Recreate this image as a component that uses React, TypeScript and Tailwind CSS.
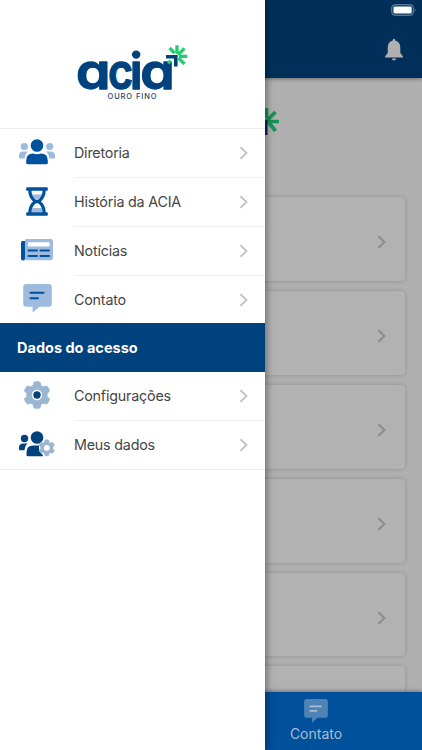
import React from "react";

const PRIMARY = "#00427d";
const LIGHT = "#9dbbdc";

function Logo() {
  return (
    <svg width="134" height="74" viewBox="66 36 134 74" className="block shrink-0">
      <g
        fill={PRIMARY}
        stroke={PRIMARY}
        strokeWidth="1.3"
        strokeLinejoin="round"
        fontFamily="Inter, sans-serif"
        fontWeight="600"
        fontSize="49"
        style={{ fontFeatureSettings: '"cv11"' }}
      >
        <text x="76" y="89" textLength="34.5" lengthAdjust="spacingAndGlyphs">a</text>
        <text x="108" y="89" textLength="25" lengthAdjust="spacingAndGlyphs">c</text>
        <text x="129.700" y="89">i</text>
        <text x="140.300" y="89" textLength="34.5" lengthAdjust="spacingAndGlyphs">a</text>
      </g>
      <text x="107.500" y="99" textLength="49" fontFamily="Inter, sans-serif" fontWeight="500" fontSize="7.500" fill="#24456f">OURO FINO</text>
      <path d="M166 56.800h9.800V66.500" fill="none" stroke="#fff" strokeWidth="6" />
      <path d="M166 56.800h9.800V66.500" fill="none" stroke={PRIMARY} strokeWidth="3.600" />
      <g stroke="#22cf70" strokeWidth="3.300">
        <path d="M177 45.300v8.500M169.500 48l5 5M184.500 48.300l-6.500 6.500M187.300 56.300h-8.300M184.500 64l-6-6M170.700 60.700l-2.600 2.600" />
      </g>
    </svg>
  );
}

function People() {
  return (
    <svg width="36" height="26" viewBox="0 0 36 26">
      <g fill={LIGHT}>
        <circle cx="5.300" cy="7.500" r="3.600" />
        <circle cx="30.700" cy="7.500" r="3.600" />
        <path d="M0 18.500v-2Q0 12.500 4.500 12.500H9q-2.800 2-3.300 7H1q-1 0-1-1zM36 18.500v-2Q36 12.500 31.500 12.500H27q2.800 2 3.300 7H35q1 0 1-1z" />
      </g>
      <g fill="#00529e">
        <circle cx="18" cy="6.500" r="6.300" />
        <path d="M7.200 24v-2.500Q7.200 14.500 14 14.500q4 1.300 8 0 6.800 0 6.800 7V24q0 1.300-1.500 1.300H8.700q-1.500 0-1.500-1.300z" />
      </g>
    </svg>
  );
}

function Hourglass() {
  return (
    <svg width="22" height="29" viewBox="0 0 22 29">
      <path d="M6 7.500h10c-.8 2.300-2.500 4-5 5-2.500-1-4.200-2.700-5-5zM5 25.500c0-2.500.5-3.500 1.500-4.500h9c1 1 1.500 2 1.500 4.500z" fill={LIGHT} />
      <path d="M3.800 3c0 5.500 2.200 9 5.700 11.500C6 17 3.800 20.500 3.800 26M18.200 3c0 5.500-2.200 9-5.700 11.500 3.500 2.500 5.700 6 5.700 11.500" fill="none" stroke="#00529e" strokeWidth="3.200" />
      <path d="M1 .300h20q.8 0 .8.800v1.800q0 .8-.8.800H1q-.8 0-.8-.8V1.100q0-.8.8-.8zM1 25.300h20q.8 0 .8.800v1.800q0 .8-.8.800H1q-.8 0-.8-.8v-1.800q0-.8.8-.8zM9.500 12.700h3v3.600h-3z" fill="#00529e" />
    </svg>
  );
}

function News() {
  return (
    <svg width="32" height="22" viewBox="0 0 32 22">
      <path d="M0 3.500Q0 2 1.500 2H4v18q0 1.500-2 1.500T0 19.500z" fill="#00529e" />
      <path d="M4 1.500Q4 0 5.500 0H30q2 0 2 2v17q0 2.300-2.300 2.300H3Q4 20.500 4 19z" fill={LIGHT} />
      <rect x="7" y="3.300" width="21.700" height="4.200" rx=".5" fill="#fff" />
      <path d="M7.500 11.500h8.500M19.500 11.500h8.500M7.500 17h8.500M19.500 17h8.500" stroke="#00529e" strokeWidth="2" strokeLinecap="round" />
    </svg>
  );
}

function Chat({ width, bubble, line }: { width: number; bubble: string; line: string }) {
  return (
    <svg width={width} height={width} viewBox="0 0 29 29">
      <path d="M3.500 0h22q3.300 0 3.300 3.300v16.200q0 3.300-3.300 3.300H16.500l-6.200 5.300q-.7.500-.7-.5v-4.800H3.500Q.2 22.800.2 19.500V3.300Q.2 0 3.500 0z" fill={bubble} />
      <path d="M7.500 8.800h13M7.500 14.300H15" stroke={line} strokeWidth="2.100" strokeLinecap="round" />
    </svg>
  );
}

function GearShape() {
  return (
    <path
      d="M11 1.200Q14 .2 17 1.200L17.700 4.500 20.300 6 23.600 5Q25.900 7.200 26.500 10L24.100 12.400V15.600L26.500 18Q25.900 20.800 23.600 23L20.300 22 17.700 23.500 17 26.800Q14 27.800 11 26.800L10.300 23.500 7.700 22 4.400 23Q2.100 20.800 1.500 18L3.900 15.600V12.400L1.500 10Q2.100 7.200 4.400 5L7.700 6 10.300 4.500z"
      fill="#9bb6d1"
      stroke="#9bb6d1"
      strokeLinejoin="round"
    />
  );
}

function Gear() {
  return (
    <svg width="28" height="28" viewBox="0 0 28 28">
      <GearShape />
      <circle cx="14" cy="14" r="5.200" fill="#fff" />
      <circle cx="14" cy="14" r="3.700" fill={PRIMARY} />
    </svg>
  );
}

function PeopleGear() {
  return (
    <svg width="36" height="26" viewBox="0 0 36 26">
      <g fill={PRIMARY}>
        <circle cx="5.500" cy="7.500" r="3.700" />
        <circle cx="18" cy="6.500" r="6.300" />
        <path d="M0 18v-1.500Q0 12.500 4.500 12.500h4q-2.500 2-3 6.800H1q-1 0-1-1.300zM7.500 24v-2.500q0-7 6.500-7h8v7.500q2 1 2 3.300H9q-1.500 0-1.500-1.300z" />
      </g>
      <svg x="19.300" y="8.300" width="17" height="17" viewBox="0 0 28 28" overflow="visible">
        <circle cx="14" cy="14" r="13" fill="#fff" />
        <GearShape />
        <circle cx="14" cy="14" r="4.800" fill="#fff" />
      </svg>
    </svg>
  );
}

function Chevron({ color }: { color: string }) {
  return (
    <svg width="10" height="14" viewBox="0 0 10 14" className="shrink-0">
      <path d="M1.500 1.200 7.500 7 1.500 12.800" fill="none" stroke={color} strokeWidth="1.900" />
    </svg>
  );
}

function Row({ icon, label, last = false }: { icon: React.ReactNode; label: string; last?: boolean }) {
  return (
    <li className={"flex items-stretch " + (last ? "h-12" : "h-[49px]")}>
      <div className="flex w-[74px] items-center justify-center pb-[3px]">{icon}</div>
      <div className={"flex flex-1 items-center justify-between pr-4 " + (last ? "" : "border-b border-[#efefef]")}>
        <span className="text-[14.300px] tracking-[-0.200px] text-[#454545]">{label}</span>
        <Chevron color="#c4c4c4" />
      </div>
    </li>
  );
}

function Drawer() {
  return (
    <aside className="absolute inset-y-0 left-0 w-[265px] bg-white shadow-[0_0_9px_rgba(0,0,0,0.55)]">
      <div className="flex h-[129px] justify-center border-b border-[#ececec] pt-9">
        <Logo />
      </div>
      <ul className="h-[194px]">
        <Row icon={<People />} label="Diretoria" />
        <Row icon={<Hourglass />} label="História da ACIA" />
        <Row icon={<News />} label="Notícias" />
        <Row icon={<Chat width={29} bubble={LIGHT} line="#00529e" />} label="Contato" last />
      </ul>
      <h2 className="relative flex h-[49px] items-center bg-[#00427d] pl-[17px] text-[14.500px] font-bold text-white">Dados do acesso</h2>
      <ul className="border-b border-[#ececec]">
        <Row icon={<Gear />} label="Configurações" />
        <Row icon={<PeopleGear />} label="Meus dados" last />
      </ul>
    </aside>
  );
}

export default function App() {
  return (
    <div className="relative flex h-[750px] w-[422px] flex-col overflow-hidden bg-[#b0b0b0] font-[Inter,sans-serif]">
      <header className="flex h-[78px] shrink-0 flex-col items-end bg-[#003059] shadow-[0_1px_4px_rgba(0,0,0,0.4)]">
        <svg width="26" height="12" viewBox="0 0 26 12" className="mt-[4px] mr-[5px] shrink-0">
          <rect x=".8" y=".8" width="21.500" height="10.400" rx="2.800" fill="none" stroke="#7f96ab" />
          <rect x="2.500" y="2.500" width="18.200" height="7" rx="1.300" fill="#fff" />
          <path d="M23.800 4.300q1.500 1.700 0 3.400z" fill="#7f96ab" />
        </svg>
        <svg width="20" height="24" viewBox="0 0 20 24" className="mt-[22px] mr-[18px] shrink-0">
          <path d="M10 .8q1.300 0 1.300 1.800 5 1.300 5 7.400V15l2.700 3.500v.9H1v-.9L3.700 15v-5q0-6.100 5-7.400Q8.700.8 10 .8zM7.800 20.500h4.400q-.4 2-2.200 2t-2.200-2z" fill="#b0b0b0" />
        </svg>
      </header>
      <main className="flex min-h-0 flex-1 flex-col overflow-hidden">
        <div className="flex h-[119px] shrink-0 items-start justify-center pt-[28px]">
          <svg width="142" height="90" viewBox="0 0 142 90">
            <path d="M126.500 2v10M135.500 6l-8.500 8.500M139 15.500h-10M135.500 25l-7.500-9.500" stroke="#159555" strokeWidth="3.700" fill="none" />
            <path d="M115 16h10.300V29" stroke="#002f5c" strokeWidth="4.500" fill="none" />
          </svg>
        </div>
        <div className="flex flex-col gap-[10px] px-[17px]">
          {[0, 1, 2, 3, 4, 5].map((i) => (
            <div key={i} className="flex h-[83.900px] shrink-0 items-center justify-end rounded-[4px] bg-[#b2b2b2] pt-[7px] pr-[18px] shadow-[0_0_4px_rgba(0,0,0,0.2)]">
              <Chevron color="#8b8b8b" />
            </div>
          ))}
        </div>
      </main>
      <footer className="flex h-[58px] shrink-0 justify-end bg-[#00509b] shadow-[0_-1px_4px_rgba(0,0,0,0.35)]">
        <div className="mr-[53px] flex w-[106px] flex-col items-center pt-[7px]">
          <Chat width={24} bubble="#4f82b5" line="#a9bdd0" />
          <span className="mt-[2px] text-[14px] leading-[18px] text-[#a9bdd0]">Contato</span>
        </div>
      </footer>
      <Drawer />
    </div>
  );
}
